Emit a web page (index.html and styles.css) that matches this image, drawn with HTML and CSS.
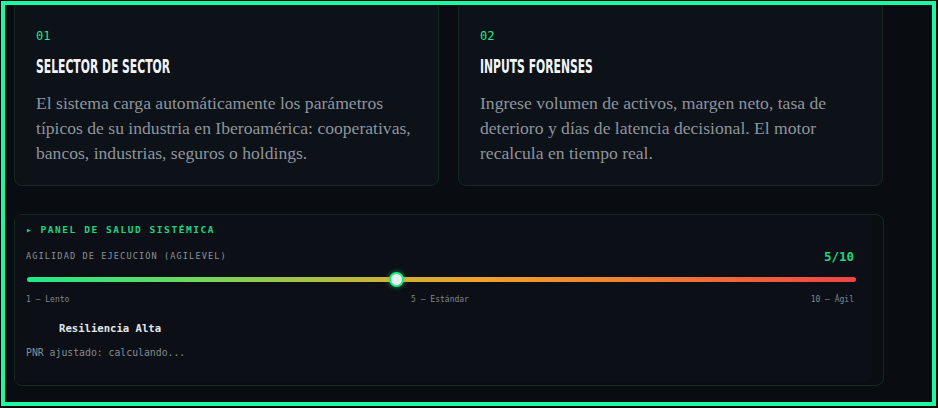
FILE: index.html
```
<!DOCTYPE html>
<html lang="es">
<head>
<meta charset="utf-8">
<link rel="stylesheet" href="styles.css">
</head>
<body>
<div class="screen">
  <div class="content">
    <div class="cards">
      <div class="card">
        <div class="num">01</div>
        <h3 class="title"><span class="title-text">Selector de Sector</span></h3>
        <p class="text">El sistema carga automáticamente los parámetros típicos de su industria en Iberoamérica: cooperativas, bancos, industrias, seguros o holdings.</p>
      </div>
      <div class="card">
        <div class="num">02</div>
        <h3 class="title"><span class="title-text">Inputs Forenses</span></h3>
        <p class="text">Ingrese volumen de activos, margen neto, tasa de deterioro y días de latencia decisional. El motor recalcula en tiempo real.</p>
      </div>
    </div>
    <div class="panel">
      <div class="panel-inner">
        <div class="panel-head">▸ PANEL DE SALUD SISTÉMICA</div>
        <div class="metric-row">
          <span class="metric-label">AGILIDAD DE EJECUCIÓN (AGILEVEL)</span>
          <span class="metric-value">5/10</span>
        </div>
        <div class="slider">
          <div class="track"></div>
          <div class="thumb" style="left: 43.75%"></div>
        </div>
        <div class="scale">
          <span>1 — Lento</span>
          <span>5 — Estándar</span>
          <span>10 — Ágil</span>
        </div>
        <div class="status"><span class="status-icon"></span>Resiliencia Alta</div>
        <div class="pnr">PNR ajustado: calculando...</div>
      </div>
    </div>
  </div>
</div>
</body>
</html>
```

FILE: styles.css
```
* { box-sizing: border-box; }
html, body { margin: 0; padding: 0; background: #06080b; }
body { width: 938px; height: 408px; overflow: hidden; }

.screen {
  position: relative;
  margin: 1px 0 0 1px;
  width: 935px;
  height: 405px;
  background: #090c10;
  overflow: hidden;
}
.screen::after {
  content: "";
  position: absolute;
  inset: 0;
  border: 4px solid #1ef8a0;
  pointer-events: none;
}

.content {
  padding: 0 0 0 13px;
  margin-top: -1px;
  width: 883px;
}

.cards {
  display: flex;
  gap: 19px;
}
.card {
  width: 425px;
  height: 186px;
  background: #0d1118;
  border: 1px solid #14291f;
  border-radius: 8px;
  padding: 28px 20px 0 21px;
}
.num {
  font-family: "DejaVu Sans Mono", monospace;
  font-size: 12px;
  line-height: 14px;
  color: #1de98b;
}
.title {
  margin: 12px 0 0;
  font-family: "DejaVu Sans", sans-serif;
  font-weight: 700;
  font-size: 20px;
  line-height: 22px;
  text-transform: uppercase;
  color: #f2f5f8;
  white-space: nowrap;
}
.title-text {
  display: inline-block;
  transform: scaleX(0.54);
  transform-origin: left center;
}
.text {
  margin: 14px 0 0;
  font-family: "Liberation Serif", serif;
  font-size: 17.6px;
  line-height: 25px;
  color: #8e959d;
}

.panel {
  margin-top: 28px;
  width: 870px;
  height: 172px;
  background: #0a0d12;
  border: 1px solid #122a20;
  border-radius: 8px;
  padding: 0 11px 3px 0;
}
.panel-inner {
  height: 100%;
  background: #0c1016;
  border-radius: 0 0 8px 0;
  padding: 8px 16px 0 11px;
  font-family: "DejaVu Sans Mono", monospace;
}
.panel-head {
  font-size: 9.5px;
  line-height: 14px;
  font-weight: 700;
  letter-spacing: 1.55px;
  color: #1fd384;
}
.metric-row {
  margin-top: 10px;
  height: 18px;
  display: flex;
  justify-content: space-between;
  align-items: center;
}
.metric-label {
  font-size: 8.6px;
  letter-spacing: 1.1px;
  color: #8a9098;
}
.metric-value {
  font-size: 12.5px;
  font-weight: 700;
  color: #1fd384;
  margin-right: 2px;
}
.slider {
  position: relative;
  margin-top: 6px;
  height: 16px;
  display: flex;
  align-items: center;
  padding: 0 0 0 1px;
}
.track {
  width: 100%;
  height: 5px;
  border-radius: 3px;
  background: linear-gradient(90deg, #1de98b 0%, #6fd85e 20%, #c8b63a 42%, #f0a22c 54%, #f07a32 76%, #ef4444 100%);
}
.thumb {
  position: absolute;
  top: 1px;
  width: 15px;
  height: 15px;
  border-radius: 50%;
  background: #e6f1ee;
  border: 2px solid #1de98b;
  box-shadow: 0 0 5px rgba(29, 233, 139, 0.6);
}
.scale {
  margin-top: 7px;
  display: flex;
  justify-content: space-between;
  font-size: 8px;
  line-height: 12px;
  color: #7f868e;
  padding-right: 2px;
}
.status {
  margin-top: 14px;
  display: flex;
  align-items: center;
  font-size: 10.6px;
  line-height: 16px;
  font-weight: 700;
  color: #e2e6ea;
}
.status-icon {
  display: inline-block;
  width: 33px;
  height: 16px;
}
.pnr {
  margin-top: 10px;
  font-size: 9.8px;
  line-height: 14px;
  color: #858b93;
}
```
